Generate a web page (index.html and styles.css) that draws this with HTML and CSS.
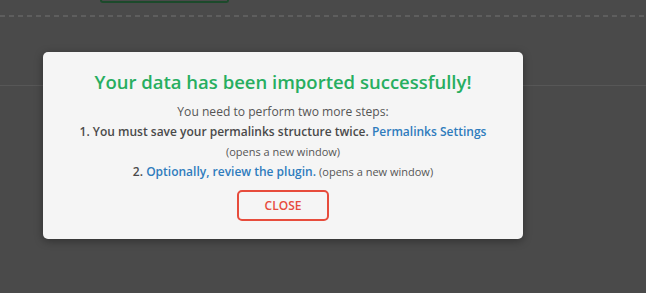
FILE: index.html
```html
<!DOCTYPE html>
<html>
<head>
<meta charset="utf-8">
<link rel="stylesheet" href="styles.css">
</head>
<body>
<div class="page">
  <div class="toolbar">
    <div class="tb-btn"></div>
  </div>
  <div class="dashed"></div>
  <div class="section"></div>
</div>
<div class="modal">
  <h2 class="title">Your data has been imported successfully!</h2>
  <p class="line">You need to perform two more steps:</p>
  <p class="line strong">1. You must save your permalinks structure twice. <a class="link" href="#">Permalinks Settings</a></p>
  <p class="line small">(opens a new window)</p>
  <p class="line strong">2. <a class="link" href="#">Optionally, review the plugin.</a> <span class="small">(opens a new window)</span></p>
  <div class="actions"><button class="close">CLOSE</button></div>
</div>
</body>
</html>
```
FILE: styles.css
```css
html, body {
  margin: 0;
  padding: 0;
}
body {
  background: #4a4a4a;
  width: 646px;
  height: 293px;
  overflow: hidden;
  position: relative;
  font-family: "Open Sans", "Noto Sans", sans-serif;
}
.toolbar {
  height: 15px;
  padding-left: 100px;
}
.tb-btn {
  width: 125px;
  height: 1px;
  border: 2px solid #1c4a2b;
  border-top: none;
  border-radius: 0 0 4px 4px;
}
.dashed {
  height: 2px;
  background: repeating-linear-gradient(to right, #5e5e5e 0 5px, transparent 5px 9px);
}
.section {
  margin-top: 68px;
  border-top: 1px solid #575757;
}
.modal {
  position: absolute;
  left: 43px;
  top: 52px;
  width: 480px;
  height: 187px;
  box-sizing: border-box;
  background: #f5f5f5;
  border-radius: 5px;
  box-shadow: 0 2px 8px rgba(0,0,0,0.35);
  text-align: center;
  padding-top: 17px;
}
.title {
  margin: 0 0 7px;
  font-size: 18.5px;
  font-weight: 600;
  color: #27ae60;
  line-height: 26px;
}
.line {
  margin: 0;
  font-size: 12.1px;
  line-height: 20px;
  color: #555;
}
.line.strong {
  font-size: 12px;
  font-weight: 600;
  color: #4a4a4a;
}
.small {
  font-size: 11px;
  font-weight: 400;
  color: #555;
}
.line.small {
  line-height: 20px;
}
.link {
  color: #2f7cbd;
  text-decoration: none;
  font-weight: 600;
}
.actions {
  margin-top: 8px;
}
.close {
  width: 92px;
  height: 31px;
  border: 2px solid #e74c3c;
  border-radius: 5px;
  background: transparent;
  color: #e74c3c;
  font-family: inherit;
  font-size: 12px;
  font-weight: 600;
}
```
